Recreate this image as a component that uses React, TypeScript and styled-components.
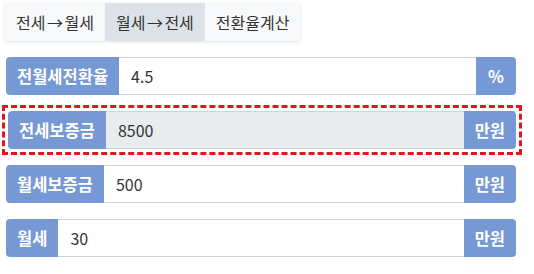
import React from "react";
import styled, { createGlobalStyle } from "styled-components";

const GlobalStyle = createGlobalStyle`
  html, body {
    margin: 0;
    padding: 0;
    background: #fff;
  }
  body {
    font-family: "Noto Sans CJK KR", "Noto Sans", sans-serif;
    color: #333;
  }
`;

const Page = styled.div`
  padding: 3px 0 0 5px;
`;

const Tabs = styled.div`
  display: inline-flex;
  box-shadow: 0 1px 3px rgba(0, 0, 0, 0.12);
`;

const Tab = styled.button<{ $active?: boolean }>`
  height: 38px;
  padding: 0 11px;
  border: none;
  background: ${(p) => (p.$active ? "#dde2e8" : "#f8f9fa")};
  color: #333;
  font-family: "Noto Sans CJK KR", sans-serif;
  font-size: 16px;
  cursor: pointer;
`;

const Arrow = styled.span`
  margin: 0 1.5px;
`;

const Form = styled.div`
  display: flex;
  flex-direction: column;
  gap: 16px;
  width: 510px;
  margin: 16px 0 0 1px;
`;

const Row = styled.div<{ $highlight?: boolean }>`
  display: flex;
  height: 38px;
  ${(p) =>
    p.$highlight &&
    `
    outline: 3px dashed #e8141c;
    outline-offset: 3px;
    margin-left: 2px;
  `}
`;

const Label = styled.span`
  display: flex;
  align-items: center;
  padding: 0 11px;
  background: #7698d4;
  color: #fff;
  font-size: 16.5px;
  font-weight: 700;
  border-radius: 4px 0 0 4px;
  white-space: nowrap;
`;

const Suffix = styled(Label)<{ $narrow?: boolean }>`
  border-radius: 0 4px 4px 0;
  padding: 0 ${(p) => (p.$narrow ? "12px" : "11px")};
`;

const Input = styled.input`
  flex: 1;
  min-width: 0;
  height: 100%;
  box-sizing: border-box;
  border: 1px solid #ced4da;
  border-left: none;
  border-right: none;
  padding: 0 12px;
  font-family: "Noto Sans CJK KR", "Noto Sans", sans-serif;
  font-size: 16px;
  color: #333;
  background: #fff;
  outline: none;
  &:disabled {
    background: #e9ecef;
    color: #333;
  }
`;

const fields = [
  { label: "전월세전환율", value: "4.5", unit: "%" },
  { label: "전세보증금", value: "8500", unit: "만원", highlight: true, disabled: true },
  { label: "월세보증금", value: "500", unit: "만원" },
  { label: "월세", value: "30", unit: "만원" },
];

export default function App() {
  return (
    <Page>
      <GlobalStyle />
      <Tabs>
        <Tab>
          전세<Arrow>→</Arrow>월세
        </Tab>
        <Tab $active>
          월세<Arrow>→</Arrow>전세
        </Tab>
        <Tab>전환율계산</Tab>
      </Tabs>
      <Form>
        {fields.map((f) => (
          <Row key={f.label} $highlight={f.highlight}>
            <Label>{f.label}</Label>
            <Input defaultValue={f.value} disabled={f.disabled} />
            <Suffix $narrow={f.unit === "%"}>{f.unit}</Suffix>
          </Row>
        ))}
      </Form>
    </Page>
  );
}
